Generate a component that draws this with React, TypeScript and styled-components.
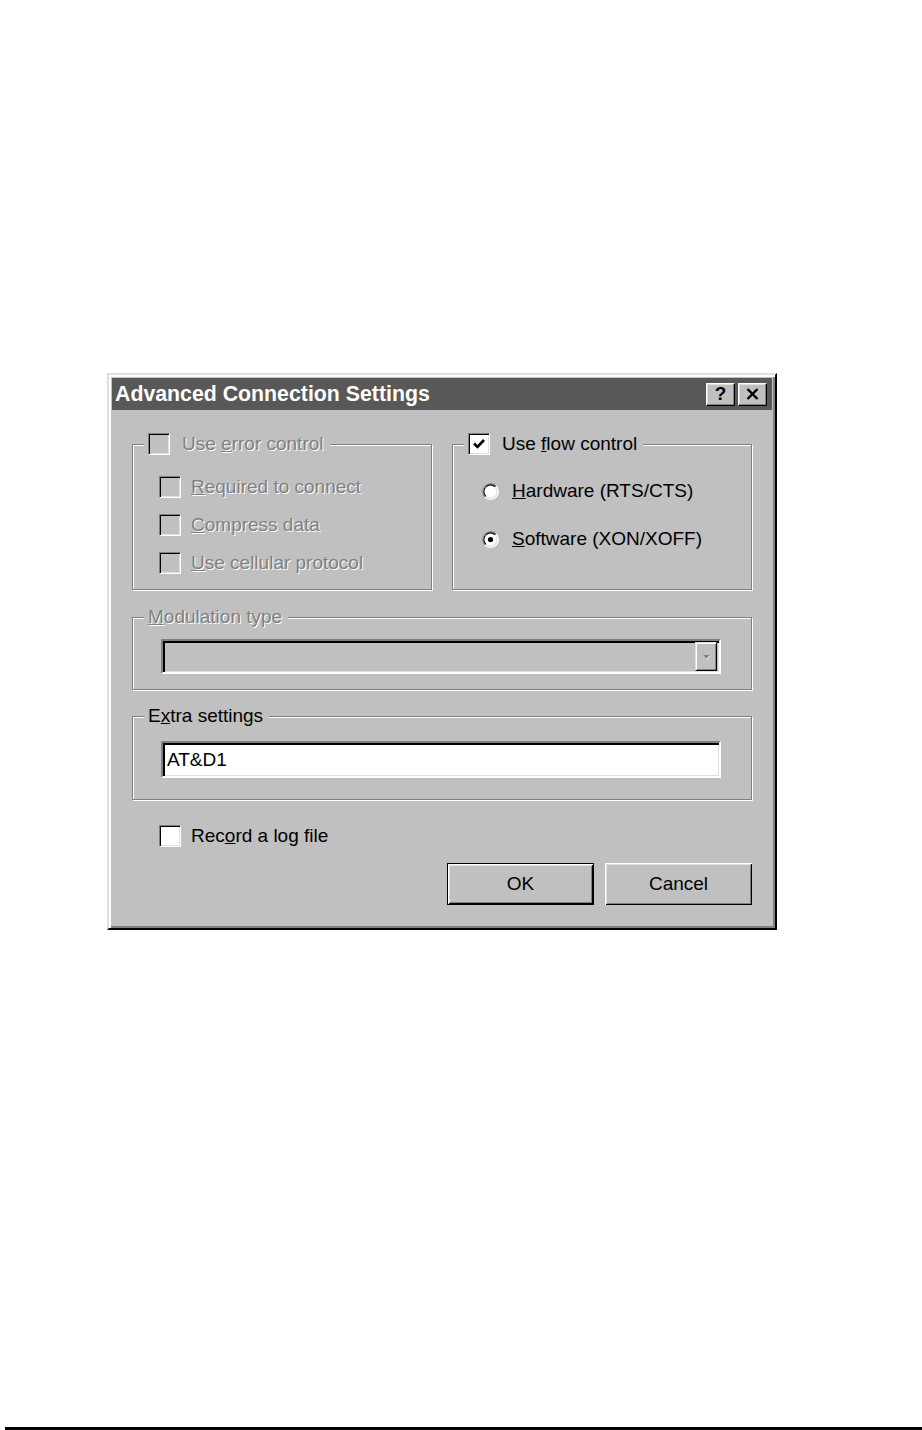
import React from "react";
import styled, { createGlobalStyle } from "styled-components";

const GlobalStyle = createGlobalStyle`
  html, body {
    margin: 0;
    padding: 0;
    background: #fff;
  }
  body {
    font-family: "Liberation Sans", Arial, sans-serif;
  }
`;

const Page = styled.div`
  display: flex;
  flex-direction: column;
  height: 1430px;
`;

const Window = styled.div`
  box-sizing: border-box;
  width: 670px;
  margin: 373px 0 0 107px;
  padding: 3px;
  background: #c0c0c0;
  border-top: 2px solid #dfdfdf;
  border-left: 2px solid #dfdfdf;
  border-right: 2px solid #000;
  border-bottom: 2px solid #000;
  box-shadow: inset 2px 2px 0 #fff, inset -2px -2px 0 #808080;
`;

const TitleBar = styled.div`
  display: flex;
  align-items: center;
  height: 32px;
  padding: 0 5px 0 3px;
  background: #585858;
`;

const Title = styled.div`
  flex: 1;
  color: #fff;
  font-weight: bold;
  font-size: 21.3px;
  line-height: 32px;
`;

const TitleButtons = styled.div`
  display: flex;
  gap: 3px;
`;

const TitleButton = styled.div`
  box-sizing: border-box;
  width: 29px;
  height: 23px;
  display: flex;
  align-items: center;
  justify-content: center;
  background: #c0c0c0;
  border-top: 1px solid #fff;
  border-left: 1px solid #fff;
  border-right: 1px solid #000;
  border-bottom: 1px solid #000;
  box-shadow: inset -1px -1px 0 #808080, inset 1px 1px 0 #dfdfdf;
  font-weight: bold;
  font-size: 19px;
  color: #000;
`;

const Body = styled.div`
  padding: 34px 20px 20px;
  font-size: 19px;
  color: #000;
`;

const TopRow = styled.div`
  display: grid;
  grid-template-columns: 300px 300px;
  gap: 20px;
`;

const GroupBox = styled.div<{ $pad: string; $mt?: number }>`
  position: relative;
  box-sizing: border-box;
  margin-top: ${(p) => p.$mt ?? 0}px;
  padding: ${(p) => p.$pad};
  border: 1px solid #808080;
  box-shadow: 1px 1px 0 #fff, inset 1px 1px 0 #fff;
`;

const Caption = styled.div`
  position: absolute;
  top: -12px;
  left: 11px;
  display: flex;
  align-items: center;
  gap: 12px;
  height: 22px;
  padding: 0 6px 0 4px;
  background: #c0c0c0;
`;

const Stack = styled.div<{ $gap: number }>`
  display: flex;
  flex-direction: column;
  gap: ${(p) => p.$gap}px;
`;

const Row = styled.div<{ $gap?: number }>`
  display: flex;
  align-items: center;
  height: 24px;
  gap: ${(p) => p.$gap ?? 10}px;
`;

const Label = styled.span<{ $disabled?: boolean }>`
  line-height: 22px;
  white-space: nowrap;
  color: ${(p) => (p.$disabled ? "#808080" : "#000")};
  text-shadow: ${(p) => (p.$disabled ? "1px 1px 0 #fff" : "none")};
`;

const Box = styled.span<{ $disabled?: boolean }>`
  box-sizing: border-box;
  flex: none;
  width: 22px;
  height: 22px;
  display: inline-flex;
  align-items: center;
  justify-content: center;
  background: ${(p) => (p.$disabled ? "#c0c0c0" : "#fff")};
  border-top: 1px solid #808080;
  border-left: 1px solid #808080;
  border-right: 1px solid #fff;
  border-bottom: 1px solid #fff;
  box-shadow: inset 1px 1px 0 #000, inset -1px -1px 0 #dfdfdf;
`;

const Field = styled.div<{ $h: number; $bg: string }>`
  box-sizing: border-box;
  height: ${(p) => p.$h}px;
  display: flex;
  align-items: center;
  padding: 0 2px 0 4px;
  background: ${(p) => p.$bg};
  border-top: 2px solid #808080;
  border-left: 2px solid #808080;
  border-right: 2px solid #fff;
  border-bottom: 2px solid #fff;
  box-shadow: inset 2px 2px 0 #000, inset -1px -1px 0 #dfdfdf;
`;

const FieldText = styled.span`
  flex: 1;
  line-height: 22px;
`;

const DropButton = styled.div`
  box-sizing: border-box;
  width: 22px;
  height: 29px;
  display: flex;
  align-items: center;
  justify-content: center;
  background: #c0c0c0;
  border-top: 1px solid #dfdfdf;
  border-left: 1px solid #dfdfdf;
  border-right: 1px solid #000;
  border-bottom: 1px solid #000;
  box-shadow: inset 1px 1px 0 #fff, inset -1px -1px 0 #808080;
`;

const Buttons = styled.div`
  display: flex;
  justify-content: flex-end;
  gap: 11px;
  margin-top: 15px;
`;

const PushButton = styled.div<{ $default?: boolean }>`
  box-sizing: border-box;
  width: 147px;
  height: 42px;
  display: flex;
  align-items: center;
  justify-content: center;
  background: #c0c0c0;
  border: ${(p) => (p.$default ? "1px solid #000" : "none")};
  box-shadow: inset 1px 1px 0 #fff, inset -1px -1px 0 #000, inset 2px 2px 0 #dfdfdf,
    inset -2px -2px 0 #808080;
  font-size: 19px;
`;

const RecordRow = styled(Row)`
  margin-top: 24px;
  padding-left: 27px;
`;

const BottomRule = styled.div`
  margin: auto 0 0 5px;
  height: 3px;
  background: #000;
`;

function CheckBox({ checked, disabled }: { checked?: boolean; disabled?: boolean }) {
  return (
    <Box $disabled={disabled}>
      {checked && (
        <svg width="14" height="14" viewBox="0 0 14 14">
          <path d="M2 6.5 L5.5 10 L12 3" fill="none" stroke="#000" strokeWidth="2.6" />
        </svg>
      )}
    </Box>
  );
}

function Radio({ checked }: { checked?: boolean }) {
  return (
    <svg width="17" height="17" viewBox="0 0 17 17" style={{ flex: "none" }}>
      <circle cx="8.5" cy="8.5" r="8.5" fill="#fff" />
      <path d="M2.49 14.51 A8.5 8.5 0 0 1 14.51 2.49 Z" fill="#808080" />
      <circle cx="8.5" cy="8.5" r="7.3" fill="#dfdfdf" />
      <path d="M3.34 13.66 A7.3 7.3 0 0 1 13.66 3.34 Z" fill="#000" />
      <circle cx="8.5" cy="8.5" r="6.1" fill="#fff" />
      {checked && <circle cx="8.5" cy="8.5" r="2.6" fill="#000" />}
    </svg>
  );
}

export default function App() {
  return (
    <Page>
      <GlobalStyle />
      <Window>
        <TitleBar>
          <Title>Advanced Connection Settings</Title>
          <TitleButtons>
            <TitleButton>?</TitleButton>
            <TitleButton>
              <svg width="13" height="12" viewBox="0 0 13 12">
                <path d="M1.5 1 L11.5 11 M11.5 1 L1.5 11" stroke="#000" strokeWidth="2.4" />
              </svg>
            </TitleButton>
          </TitleButtons>
        </TitleBar>
        <Body>
          <TopRow>
            <GroupBox $pad="30px 10px 14px 26px">
              <Caption>
                <CheckBox disabled />
                <Label $disabled>
                  Use <u>e</u>rror control
                </Label>
              </Caption>
              <Stack $gap={14}>
                <Row>
                  <CheckBox disabled />
                  <Label $disabled>
                    <u>R</u>equired to connect
                  </Label>
                </Row>
                <Row>
                  <CheckBox disabled />
                  <Label $disabled>
                    <u>C</u>ompress data
                  </Label>
                </Row>
                <Row>
                  <CheckBox disabled />
                  <Label $disabled>
                    <u>U</u>se cellular protocol
                  </Label>
                </Row>
              </Stack>
            </GroupBox>
            <GroupBox $pad="34px 10px 16px 29px">
              <Caption>
                <CheckBox checked />
                <Label>
                  Use <u>f</u>low control
                </Label>
              </Caption>
              <Stack $gap={24}>
                <Row $gap={13}>
                  <Radio />
                  <Label>
                    <u>H</u>ardware (RTS/CTS)
                  </Label>
                </Row>
                <Row $gap={13}>
                  <Radio checked />
                  <Label>
                    <u>S</u>oftware (XON/XOFF)
                  </Label>
                </Row>
              </Stack>
            </GroupBox>
          </TopRow>

          <GroupBox $mt={27} $pad="21px 30px 15px 28px">
            <Caption>
              <Label $disabled>
                <u>M</u>odulation type
              </Label>
            </Caption>
            <Field $h={35} $bg="#c0c0c0">
              <FieldText />
              <DropButton>
                <svg width="9" height="6" viewBox="0 0 9 6">
                  <path d="M1 1 H8 L4.5 4.5 Z" fill="#808080" />
                  <path d="M8 1.5 L8.5 2 L5 5.5 L4.5 5 Z" fill="#fff" />
                </svg>
              </DropButton>
            </Field>
          </GroupBox>

          <GroupBox $mt={26} $pad="24px 30px 21px 28px">
            <Caption>
              <Label>
                E<u>x</u>tra settings
              </Label>
            </Caption>
            <Field $h={37} $bg="#fff">
              <FieldText>AT&amp;D1</FieldText>
            </Field>
          </GroupBox>

          <RecordRow>
            <CheckBox />
            <Label>
              Rec<u>o</u>rd a log file
            </Label>
          </RecordRow>

          <Buttons>
            <PushButton $default>OK</PushButton>
            <PushButton>Cancel</PushButton>
          </Buttons>
        </Body>
      </Window>
      <BottomRule />
    </Page>
  );
}
